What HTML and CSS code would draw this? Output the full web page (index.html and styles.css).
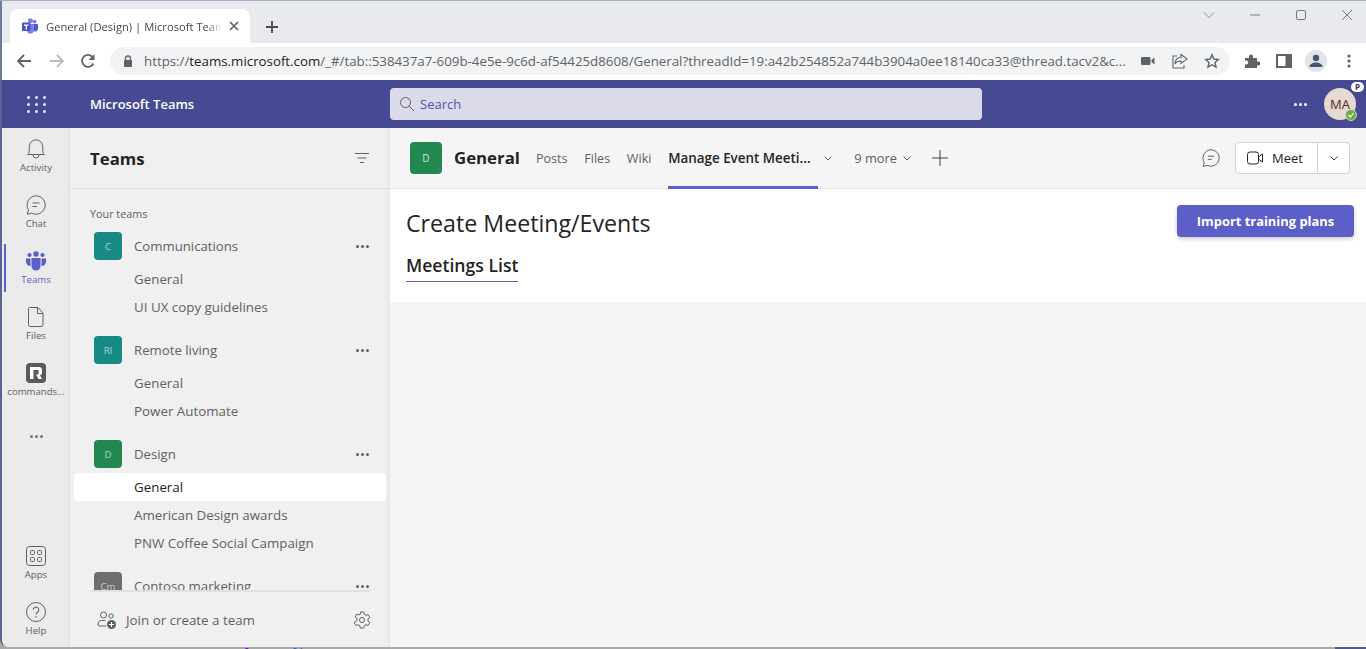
FILE: index.html
```html
<!DOCTYPE html>
<html lang="en">
<head>
    <meta charset="UTF-8">
    <title>General (Design) | Microsoft Teams</title>
    <link rel="stylesheet" href="styles.css">
</head>
<body>
<div class="window">

    <!-- browser tabs -->
    <div class="tabstrip">
        <div class="tab">
            <svg class="favicon" width="16" height="16" viewBox="0 0 16 16">
                <circle cx="12.6" cy="3.6" r="1.9" fill="#7b83eb"/>
                <circle cx="8.4" cy="2.8" r="2.5" fill="#7b83eb"/>
                <path d="M10.5 6h4.7c.4 0 .8.4.8.8v4c0 1.500-1.100 2.600-2.500 2.600-.9 0-1.900-.4-3-1.200z" fill="#5059c9"/>
                <path d="M5 6h6.400c.4 0 .6.300.6.700v5.300c0 2-1.600 3.800-3.600 3.800s-3.400-1.600-3.400-3.600z" fill="#7b83eb"/>
                <rect x="0" y="4.500" width="8.500" height="8.500" rx="1" fill="#4b53bc"/>
                <path d="M2 6.500h4.500v1.200H4.900v3.800H3.600V7.700H2z" fill="#fff"/>
            </svg>
            <span class="tab-title">General (Design) | Microsoft Teams</span>
            <svg class="tab-close" width="10" height="10" viewBox="0 0 10 10"><path d="M1 1l8 8M9 1l-8 8" stroke="#5f6368" stroke-width="1.700"/></svg>
        </div>
        <svg class="new-tab" width="14" height="14" viewBox="0 0 14 14"><path d="M7 1v12M1 7h12" stroke="#45484d" stroke-width="1.800"/></svg>
        <div class="win-controls">
            <svg width="14" height="14" viewBox="0 0 14 14"><path d="M2 4.500l5 5 5-5" fill="none" stroke="#8a8d92"/></svg>
            <svg width="14" height="14" viewBox="0 0 14 14"><path d="M2 7h10" stroke="#777a80" stroke-width="1"/></svg>
            <svg width="14" height="14" viewBox="0 0 14 14"><rect x="2.500" y="2.500" width="9" height="9" rx="1.500" fill="none" stroke="#777a80"/></svg>
            <svg width="14" height="14" viewBox="0 0 14 14"><path d="M2 2l10 10M12 2L2 12" stroke="#777a80"/></svg>
        </div>
    </div>

    <!-- browser toolbar -->
    <div class="toolbar">
        <div class="nav-btns">
            <svg width="16" height="16" viewBox="0 0 16 16"><path d="M15 8H2M8 2L2 8l6 6" fill="none" stroke="#5f6368" stroke-width="1.800"/></svg>
            <svg width="16" height="16" viewBox="0 0 16 16"><path d="M1 8h13M8 2l6 6-6 6" fill="none" stroke="#b9bcc0" stroke-width="1.800"/></svg>
            <svg class="reload" width="16" height="16" viewBox="0 0 16 16"><path d="M13.500 10.500A6 6 0 1 1 13 4.500" fill="none" stroke="#5f6368" stroke-width="1.800"/><path d="M14.500 1v6h-6z" fill="#5f6368"/></svg>
        </div>
        <div class="omnibox">
            <svg width="10" height="13" viewBox="0 0 10 13"><path d="M2.500 5V3.500a2.500 2.500 0 0 1 5 0V5" fill="none" stroke="#5f6368" stroke-width="1.300"/><rect x="1" y="5" width="8" height="7" rx="1" fill="#5f6368"/></svg>
            <span class="url"><span class="url-dim">https://</span>teams.microsoft.com<span class="url-dim">/_#/tab::538437a7-609b-4e5e-9c6d-af54425d8608/General?threadId=19:a42b254852a744b3904a0ee18140ca33@thread.tacv2&amp;c...</span></span>
            <div class="omni-icons">
                <svg width="14" height="10" viewBox="0 0 14 10"><rect x="0" y="1" width="9.500" height="8" rx="1" fill="#5f6368"/><path d="M10.500 4l3-2.500v7l-3-2.500z" fill="#5f6368"/></svg>
                <svg width="16" height="16" viewBox="0 0 16 16"><path d="M9 1.500l6 4.500-6 4.500V8C6 8 4 9 3 11c0-4 2.500-6.500 6-6.800z" fill="none" stroke="#5f6368" stroke-width="1.100"/><path d="M5 3H1v12h11v-3" fill="none" stroke="#5f6368" stroke-width="1.100"/></svg>
                <svg width="16" height="16" viewBox="0 0 16 16"><path d="M8 1.800l1.900 4.200 4.500.5-3.400 3 1 4.500L8 11.700 4 14l1-4.500-3.400-3 4.500-.5z" fill="none" stroke="#5f6368" stroke-width="1.400"/></svg>
            </div>
        </div>
        <div class="ext-icons">
            <svg width="16" height="16" viewBox="0 0 16 16"><path d="M1 5h4V3.500a2 2 0 0 1 4 0V5h4v3.500h1.300a2 2 0 0 1 0 4H13V15H1v-3.500h1.200a2 2 0 0 0 0-4H1z" fill="#5f6368"/></svg>
            <svg width="16" height="16" viewBox="0 0 16 16"><rect x="1" y="2" width="14" height="12" fill="none" stroke="#5f6368" stroke-width="2"/><rect x="9.500" y="2" width="5.500" height="12" fill="#5f6368"/></svg>
            <div class="profile">
                <svg width="16" height="16" viewBox="0 0 16 16"><circle cx="8" cy="5" r="3.200" fill="#45586e"/><path d="M1.500 14c0-3 3-4.500 6.500-4.500s6.500 1.500 6.500 4.500z" fill="#45586e"/></svg>
            </div>
            <svg width="4" height="14" viewBox="0 0 4 14"><circle cx="2" cy="2" r="1.600" fill="#5f6368"/><circle cx="2" cy="7" r="1.600" fill="#5f6368"/><circle cx="2" cy="12" r="1.600" fill="#5f6368"/></svg>
        </div>
    </div>

    <!-- teams title bar -->
    <header class="appbar">
        <div class="waffle">
            <i></i><i></i><i></i><i></i><i></i><i></i><i></i><i></i><i></i>
        </div>
        <div class="app-name">Microsoft Teams</div>
        <div class="search">
            <svg width="16" height="16" viewBox="0 0 16 16"><circle cx="6.500" cy="6.500" r="5" fill="none" stroke="#5c5e6e" stroke-width="1"/><path d="M10.200 10.200L15 15" stroke="#5c5e6e" stroke-width="1"/></svg>
            <span>Search</span>
        </div>
        <div class="more-dots white"><i></i><i></i><i></i></div>
        <div class="me">
            MA
            <span class="me-badge">P</span>
            <span class="me-status">
                <svg width="8" height="8" viewBox="0 0 8 8"><path d="M1.500 4l2 2 3-4" fill="none" stroke="#fff" stroke-width="1.100"/></svg>
            </span>
        </div>
    </header>

    <div class="main">
        <!-- app rail -->
        <nav class="rail">
            <div class="rail-item">
                <svg width="20" height="20" viewBox="0 0 20 20"><path d="M1.500 15.500c1.500-1.200 1.800-2.500 1.800-4.500V7.500a6.700 6.700 0 0 1 13.400 0V11c0 2 .3 3.300 1.800 4.500z" fill="none" stroke="#616161"/><path d="M7 16a3 3 0 0 0 6 0" fill="none" stroke="#616161"/></svg>
                <span>Activity</span>
            </div>
            <div class="rail-item">
                <svg width="20" height="20" viewBox="0 0 20 20"><path d="M10 .8a9.200 9.200 0 1 1-4.200 17.400L1.300 19.300 2.400 14.700A9.200 9.200 0 0 1 10 .8z" fill="none" stroke="#616161"/><path d="M6.500 8h7M6.500 11.500h4.500" stroke="#616161"/></svg>
                <span>Chat</span>
            </div>
            <div class="rail-item active">
                <svg width="20" height="20" viewBox="0 0 20 20">
                    <circle cx="10" cy="3" r="2.700" fill="#5b5fc7"/>
                    <circle cx="3.500" cy="4" r="2.100" fill="#5b5fc7"/>
                    <circle cx="16.500" cy="4" r="2.100" fill="#5b5fc7"/>
                    <path d="M0 7.500h4.500v7.500c-2.500 0-4.500-2-4.500-4.500zM15.500 7.500H20v3c0 2.500-2 4.500-4.500 4.500z" fill="#5b5fc7"/>
                    <path d="M5.500 7h9v8a4.500 4.500 0 0 1-9 0z" fill="#5b5fc7"/>
                </svg>
                <span>Teams</span>
            </div>
            <div class="rail-item">
                <svg width="20" height="20" viewBox="0 0 20 20"><path d="M3.500 .5h8.500l5 5.500V17.500a2 2 0 0 1-2 2H4.500a2 2 0 0 1-2-2V1.500a1 1 0 0 1 1-1z" fill="none" stroke="#616161"/><path d="M11.500 .5v6h5.500" fill="none" stroke="#616161"/></svg>
                <span>Files</span>
            </div>
            <div class="rail-item">
                <svg width="20" height="20" viewBox="0 0 20 20"><rect width="20" height="20" rx="4" fill="#5a5a5a"/><path d="M4 16V4h9a3 3 0 0 1 3 3v3a2 2 0 0 1-2 2l2 4h-3.500L10 11.500h2.500V7H7.500v9z" fill="#fff"/></svg>
                <span>commands...</span>
            </div>
            <div class="rail-dots more-dots"><i></i><i></i><i></i></div>
            <div class="rail-bottom">
                <div class="rail-item">
                    <svg width="20" height="20" viewBox="0 0 20 20"><rect x=".5" y=".5" width="19" height="19" rx="3" fill="none" stroke="#616161"/><rect x="4.500" y="4.500" width="4" height="4" rx="1" fill="none" stroke="#616161"/><rect x="11.500" y="4.500" width="4" height="4" rx="1" fill="none" stroke="#616161"/><rect x="4.500" y="11.500" width="4" height="4" rx="1" fill="none" stroke="#616161"/><rect x="11.500" y="11.500" width="4" height="4" rx="1" fill="none" stroke="#616161"/></svg>
                    <span>Apps</span>
                </div>
                <div class="rail-item last">
                    <svg width="20" height="20" viewBox="0 0 20 20"><circle cx="10" cy="10" r="9.500" fill="none" stroke="#616161"/><path d="M7.200 7.800a2.800 2.800 0 1 1 4.300 2.400c-1 .6-1.500 1.100-1.500 2.300" fill="none" stroke="#616161" stroke-width="1.100"/><circle cx="10" cy="15" r=".8" fill="#616161"/></svg>
                    <span>Help</span>
                </div>
            </div>
        </nav>

        <!-- teams list -->
        <aside class="teams-panel">
            <div class="panel-head">
                <h2>Teams</h2>
                <svg width="14" height="10" viewBox="0 0 14 10"><path d="M0 .5h14M2.500 5h9M5 9.500h4" stroke="#616161"/></svg>
            </div>
            <div class="teams-list">
                <div class="your-teams">Your teams</div>

                <div class="team">
                    <div class="team-row">
                        <div class="avatar teal">C</div>
                        <span class="team-name">Communications</span>
                        <div class="more-dots"><i></i><i></i><i></i></div>
                    </div>
                    <div class="channel first">General</div>
                    <div class="channel">UI UX copy guidelines</div>
                </div>

                <div class="team">
                    <div class="team-row">
                        <div class="avatar teal">Rl</div>
                        <span class="team-name">Remote living</span>
                        <div class="more-dots"><i></i><i></i><i></i></div>
                    </div>
                    <div class="channel first">General</div>
                    <div class="channel">Power Automate</div>
                </div>

                <div class="team">
                    <div class="team-row">
                        <div class="avatar green">D</div>
                        <span class="team-name">Design</span>
                        <div class="more-dots"><i></i><i></i><i></i></div>
                    </div>
                    <div class="channel first selected">General</div>
                    <div class="channel">American Design awards</div>
                    <div class="channel">PNW Coffee Social Campaign</div>
                </div>

                <div class="team">
                    <div class="team-row">
                        <div class="avatar gray">Cm</div>
                        <span class="team-name">Contoso marketing</span>
                        <div class="more-dots"><i></i><i></i><i></i></div>
                    </div>
                </div>
            </div>
            <div class="panel-foot">
                <svg width="20" height="20" viewBox="0 0 20 20"><circle cx="6.500" cy="5" r="3" fill="none" stroke="#616161"/><circle cx="14" cy="6" r="2.200" fill="none" stroke="#616161"/><path d="M1 15c0-3 1-4.500 3.500-4.500h4M9 16H3c-1.200 0-2-.5-2-1.500" fill="none" stroke="#616161"/><circle cx="14.500" cy="14.500" r="4.500" fill="#616161"/><path d="M14.500 12v5M12 14.500h5" stroke="#fff"/></svg>
                <span>Join or create a team</span>
                <svg class="gear" width="18" height="18" viewBox="0 0 18 18"><path d="M7.300 1h3.400l.5 2.300 1.700 1 2.200-.8 1.700 3-1.800 1.500v2l1.800 1.500-1.700 3-2.200-.8-1.700 1-.5 2.300H7.300l-.5-2.300-1.700-1-2.200.8-1.700-3L4 9.500v-2L2.200 6l1.700-3 2.200.8 1.700-1z" fill="none" stroke="#616161" stroke-linejoin="round"/><circle cx="9" cy="9" r="2.500" fill="none" stroke="#616161"/></svg>
            </div>
        </aside>

        <!-- channel content -->
        <section class="content">
            <div class="channel-head">
                <div class="avatar big green">D</div>
                <h1>General</h1>
                <div class="tabs">
                    <a>Posts</a>
                    <a>Files</a>
                    <a>Wiki</a>
                    <a class="current">Manage Event Meeti...
                        <svg width="8" height="5" viewBox="0 0 8 5"><path d="M.5.5L4 4 7.500.5" fill="none" stroke="#616161"/></svg>
                    </a>
                    <a class="more">9 more
                        <svg width="8" height="5" viewBox="0 0 8 5"><path d="M.5.5L4 4 7.500.5" fill="none" stroke="#616161"/></svg>
                    </a>
                    <svg class="add-tab" width="16" height="16" viewBox="0 0 16 16"><path d="M8 0v16M0 8h16" stroke="#424242"/></svg>
                </div>
                <svg class="conv-icon" width="18" height="18" viewBox="0 0 20 20"><path d="M10 .8a9.200 9.200 0 1 1-4.200 17.400L1.300 19.300 2.400 14.700A9.200 9.200 0 0 1 10 .8z" fill="none" stroke="#616161" stroke-width="1.100"/><path d="M6.500 8h7M6.500 11.500h4.500" stroke="#616161" stroke-width="1.100"/></svg>
                <div class="meet">
                    <div class="meet-main">
                        <svg width="16" height="14" viewBox="0 0 16 14"><rect x=".5" y="1" width="11" height="12" rx="2.500" fill="none" stroke="#242424"/><path d="M12 5.500l3.500-2.500v8l-3.500-2.500" fill="none" stroke="#242424"/></svg>
                        <span>Meet</span>
                    </div>
                    <div class="meet-arrow">
                        <svg width="8" height="5" viewBox="0 0 8 5"><path d="M.5.5L4 4 7.500.5" fill="none" stroke="#424242"/></svg>
                    </div>
                </div>
            </div>
            <div class="page">
                <div class="page-top">
                    <div class="page-title">Create Meeting/Events</div>
                    <button class="primary">Import training plans</button>
                </div>
                <div class="list-tabs"><span>Meetings List</span></div>
            </div>
        </section>
    </div>

    <!-- sliver of the window behind -->
    <div class="behind">
        <span class="behind-text"><b>format</b> <em>files</em> starts/user/.mp4</span>
        <span class="behind-end"></span>
    </div>
</div>
</body>
</html>
```

FILE: styles.css
```css
* {
    box-sizing: border-box;
}

html, body {
    margin: 0;
    padding: 0;
    height: 649px;
    overflow: hidden;
}

body {
    font-family: "Open Sans", "Noto Sans", sans-serif;
    color: #242424;
}

.window {
    height: 649px;
    display: flex;
    flex-direction: column;
    border-top: 1px solid #a3adc4;
    background-color: #a9a9a9;
    overflow: hidden;
}

svg {
    display: block;
    flex-shrink: 0;
}

/* browser chrome */
.tabstrip {
    height: 42px;
    flex-shrink: 0;
    background-color: #e8eaed;
    display: flex;
    align-items: flex-end;
    padding-left: 10px;
    border-left: 2px solid #6d7aa0;
}

.tab {
    width: 240px;
    height: 34px;
    margin-left: -2px;
    background-color: white;
    border-radius: 8px 8px 0 0;
    display: flex;
    align-items: center;
    padding: 0 11px 0 12px;
}

.tab-title {
    flex: 1;
    margin-left: 8px;
    font-size: 11.2px;
    color: #45484d;
    white-space: nowrap;
    overflow: hidden;
    -webkit-mask-image: linear-gradient(to right, black 160px, transparent 176px);
    mask-image: linear-gradient(to right, black 160px, transparent 176px);
}

.tab-close {
    margin-left: 6px;
}

.new-tab {
    margin: 0 0 9px 15px;
}

.win-controls {
    margin-left: auto;
    align-self: flex-start;
    margin-top: 7px;
    padding-right: 12px;
    display: flex;
    gap: 32px;
}

.toolbar {
    height: 37px;
    flex-shrink: 0;
    background-color: white;
    display: flex;
    align-items: center;
    border-left: 2px solid #6d7aa0;
    padding-bottom: 1px;
}

.nav-btns {
    width: 108px;
    padding-left: 14px;
    display: flex;
    gap: 17px;
}

.nav-btns .reload {
    margin-left: -2px;
}

.omnibox {
    width: 1120px;
    height: 28px;
    background-color: #f1f3f4;
    border-radius: 14px;
    display: flex;
    align-items: center;
    padding: 0 10px 0 13px;
}

.url {
    margin-left: 11px;
    font-size: 13.3px;
    color: #1f2023;
    white-space: nowrap;
    flex: 1;
    overflow: hidden;
}

.url-dim {
    color: #5f6368;
}

.omni-icons {
    width: 88px;
    display: flex;
    align-items: center;
    justify-content: space-between;
    padding-left: 9px;
}

.ext-icons {
    flex: 1;
    display: flex;
    align-items: center;
    padding-left: 14px;
    gap: 16px;
}

.profile {
    width: 22px;
    height: 22px;
    border-radius: 50%;
    background-color: #e1e4e8;
    display: flex;
    align-items: center;
    justify-content: center;
    margin: 0 4px 0 -3px;
}

/* teams title bar */
.appbar {
    height: 48px;
    flex-shrink: 0;
    background-color: #464a92;
    display: flex;
    align-items: center;
    color: white;
    position: relative;
    border-left: 2px solid #5a6396;
}

.waffle {
    width: 18px;
    margin-left: 25px;
    display: grid;
    grid-template-columns: repeat(3, 2px);
    gap: 4px 6px;
    justify-content: space-between;
}

.waffle i {
    width: 3px;
    height: 3px;
    border-radius: 50%;
    background-color: #e8e8f4;
}

.app-name {
    margin-left: 45px;
    width: 300px;
    font-size: 13px;
    font-weight: 600;
}

.search {
    width: 592px;
    height: 32px;
    background-color: #dbdae8;
    border-radius: 4px;
    display: flex;
    align-items: center;
    padding-left: 9px;
    gap: 5px;
    font-size: 13px;
    color: #4f52b2;
}

.more-dots {
    display: flex;
    gap: 2px;
}

.more-dots i {
    width: 3px;
    height: 3px;
    border-radius: 50%;
    background-color: #616161;
}

.more-dots.white {
    margin-left: auto;
}

.more-dots.white i {
    background-color: white;
}

.me {
    width: 32px;
    height: 32px;
    margin: 0 10px 0 17px;
    border-radius: 50%;
    background-color: #e6d9d2;
    color: #4a2c20;
    font-size: 13px;
    display: flex;
    align-items: center;
    justify-content: center;
    position: relative;
}

.me-badge {
    position: absolute;
    top: -6px;
    right: -8px;
    width: 13px;
    height: 10px;
    border-radius: 5px;
    background-color: white;
    color: #4b1a6b;
    font-size: 8px;
    font-weight: 700;
    line-height: 10px;
    text-align: center;
}

.me-status {
    position: absolute;
    right: -1px;
    bottom: -1px;
    width: 12px;
    height: 12px;
    border-radius: 50%;
    background-color: #6cae3e;
    border: 1px solid #d8d0cc;
    display: flex;
    align-items: center;
    justify-content: center;
}

/* main area */
.main {
    flex: 1;
    min-height: 0;
    display: flex;
    border-left: 2px solid #5a6396;
    border-bottom-left-radius: 8px;
    background-color: #f5f5f5;
    overflow: hidden;
}

.rail {
    width: 68px;
    flex-shrink: 0;
    background-color: #ebebeb;
    box-shadow: inset -6px 0 5px -4px rgba(0, 0, 0, 0.04);
    display: flex;
    flex-direction: column;
    padding-top: 4px;
}

.rail-item {
    height: 56px;
    display: flex;
    flex-direction: column;
    align-items: center;
    padding-top: 7px;
    position: relative;
    font-size: 9.6px;
    line-height: 14px;
    color: #616161;
}

.rail-item span {
    margin-top: 2px;
    white-space: nowrap;
}

.rail-item.active {
    color: #5b5fc7;
}

.rail-item.active::before {
    content: "";
    position: absolute;
    left: 2px;
    top: 0;
    width: 2px;
    height: 48px;
    background-color: #5b5fc7;
}

.rail-item.last {
    height: 52px;
}

.rail-dots {
    justify-content: center;
    margin-top: 23px;
}

.rail-dots i {
    background-color: #757575;
}

.rail-bottom {
    margin-top: auto;
}

.teams-panel {
    width: 320px;
    flex-shrink: 0;
    background-color: #f0f0f0;
    box-shadow: inset -6px 0 5px -4px rgba(0, 0, 0, 0.05);
    display: flex;
    flex-direction: column;
}

.panel-head {
    height: 61px;
    flex-shrink: 0;
    border-bottom: 1px solid #e0e0e0;
    display: flex;
    align-items: center;
    justify-content: space-between;
    padding: 0 21px 0 20px;
}

.panel-head h2 {
    margin: 0;
    font-size: 16.8px;
    font-weight: 700;
}

.teams-list {
    flex: 1;
    min-height: 0;
    overflow: hidden;
    padding: 16px 4px 0;
}

.your-teams {
    font-size: 10.8px;
    line-height: 18px;
    padding-left: 16px;
    color: #616161;
    margin-bottom: 8px;
}

.team {
    margin-bottom: 14px;
}

.team-row {
    height: 30px;
    display: flex;
    align-items: center;
    padding: 0 17px 0 20px;
}

.avatar {
    width: 28px;
    height: 28px;
    border-radius: 4px;
    display: flex;
    align-items: center;
    justify-content: center;
    color: rgba(255, 255, 255, 0.65);
    font-size: 9.6px;
    flex-shrink: 0;
}

.avatar.big {
    width: 32px;
    height: 32px;
    color: rgba(255, 255, 255, 0.8);
    font-size: 10px;
}

.teal {
    background-color: #178a86;
}

.green {
    background-color: #22884f;
}

.gray {
    background-color: #6e6e6e;
}

.team-name {
    flex: 1;
    margin-left: 12px;
    font-size: 13.2px;
    color: #616161;
}

.channel {
    height: 28px;
    line-height: 28px;
    padding-left: 60px;
    font-size: 13.35px;
    color: #616161;
    border-radius: 4px;
}

.channel.first {
    margin-top: 4px;
}

.channel.selected {
    background-color: white;
    color: #242424;
}

.panel-foot {
    height: 57px;
    flex-shrink: 0;
    margin: 0 20px;
    border-top: 2px solid #e0e0e0;
    display: flex;
    align-items: center;
    padding: 0 0 0 7px;
    font-size: 13.35px;
    color: #616161;
}

.panel-foot span {
    flex: 1;
    margin-left: 9px;
}

.gear {
    margin-right: -1px;
}

/* channel content */
.content {
    flex: 1;
    min-width: 0;
    background-color: #f5f5f5;
}

.channel-head {
    height: 61px;
    border-bottom: 1px solid #e6e6e6;
    display: flex;
    align-items: center;
    padding: 0 16px 0 20px;
}

.channel-head h1 {
    margin: 0 0 0 12px;
    font-size: 16.8px;
    font-weight: 700;
    line-height: 30px;
}

.tabs {
    height: 100%;
    display: flex;
    align-items: center;
    margin-left: 16px;
    font-size: 12.6px;
    color: #616161;
}

.tabs a {
    margin-right: 16.7px;
    height: 100%;
    display: flex;
    align-items: center;
    position: relative;
}

.tabs a.current {
    width: 150px;
    margin-right: 36px;
    color: #242424;
    font-weight: 600;
    white-space: nowrap;
    font-size: 13.4px;
}

.tabs a.current svg {
    position: absolute;
    left: 156px;
    top: 28px;
}

.tabs a.current::after {
    content: "";
    position: absolute;
    left: 0;
    right: 0;
    bottom: -1px;
    height: 3px;
    background-color: #5b5fc7;
}

.tabs a.more {
    font-size: 12.9px;
}

.tabs a.more svg {
    margin-left: 6px;
}

.add-tab {
    margin-left: 4px;
}

.conv-icon {
    margin-left: auto;
    margin-right: 15px;
}

.meet {
    width: 115px;
    height: 32px;
    display: flex;
    background-color: white;
    border: 1px solid #d1d1d1;
    border-radius: 4px;
}

.meet-main {
    width: 82px;
    display: flex;
    align-items: center;
    padding-left: 11px;
    gap: 9px;
    font-size: 13px;
    font-weight: 500;
    border-right: 1px solid #d1d1d1;
}

.meet-arrow {
    flex: 1;
    display: flex;
    align-items: center;
    justify-content: center;
}

.page {
    height: 113px;
    background-color: white;
    padding: 16px 12px 0 16px;
}

.page-top {
    display: flex;
    justify-content: space-between;
}

.page-title {
    font-size: 23.2px;
    font-weight: 500;
    line-height: 36px;
}

.primary {
    width: 177px;
    height: 32px;
    border: none;
    border-radius: 4px;
    background-color: #5b5fc7;
    color: white;
    font-family: inherit;
    font-size: 12.9px;
    font-weight: 700;
    box-shadow: 0 2px 4px rgba(0, 0, 0, 0.2);
}

.list-tabs {
    margin-top: 11px;
}

.list-tabs span {
    display: inline-block;
    height: 30px;
    line-height: 27px;
    font-size: 17.6px;
    font-weight: 600;
    border-bottom: 1px solid #5b5fc7;
}

/* window behind */
.behind {
    height: 2px;
    flex-shrink: 0;
    display: flex;
    overflow: hidden;
}

.behind-text {
    margin-left: 243px;
    font-size: 14px;
    line-height: 14px;
    color: #222;
    white-space: nowrap;
}

.behind-text b {
    font-weight: 400;
    color: #6a1b9a;
}

.behind-text em {
    font-style: normal;
    color: #3a5fc8;
}

.behind-end {
    margin-left: auto;
    width: 31px;
    background-color: #4e5a8a;
}
```
